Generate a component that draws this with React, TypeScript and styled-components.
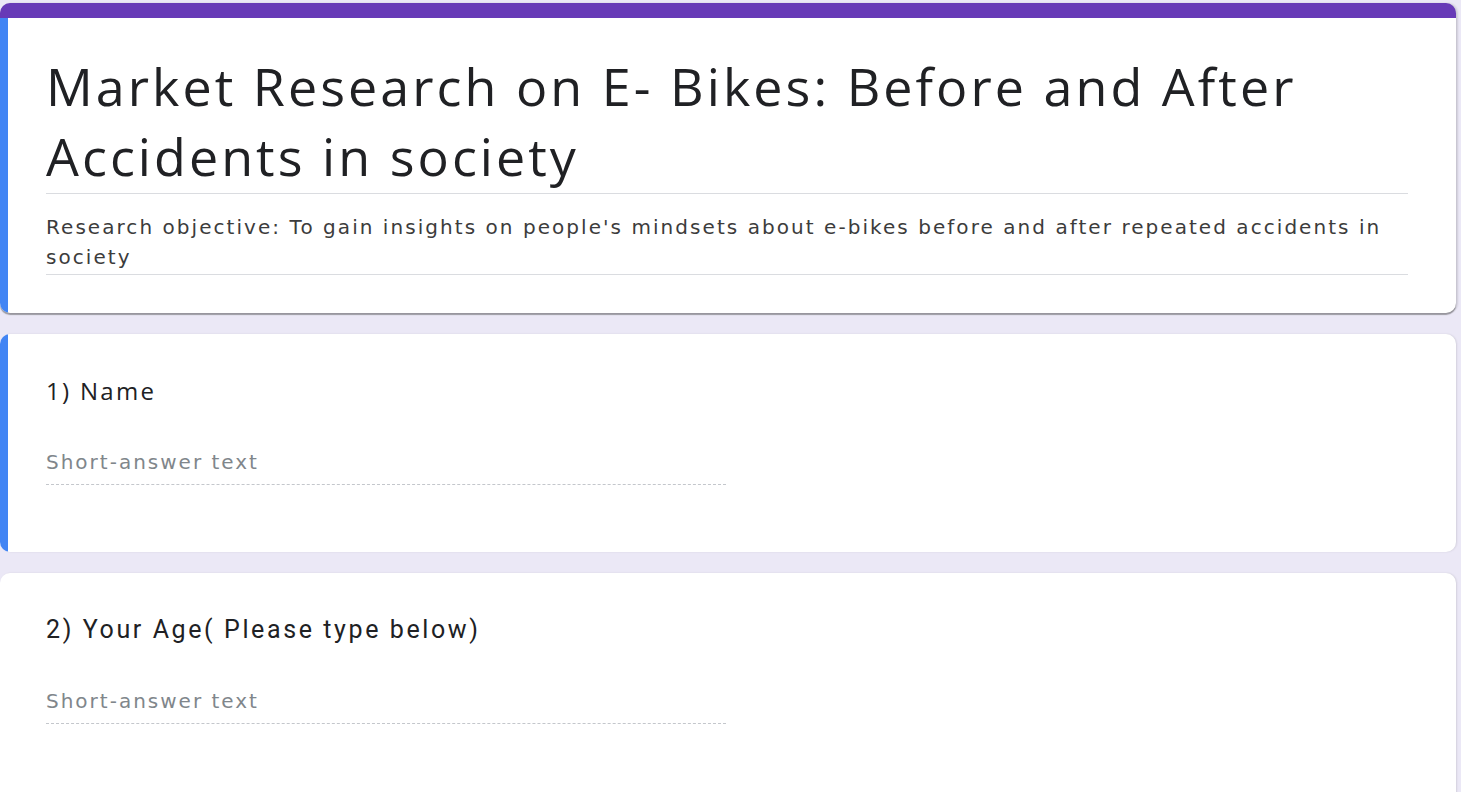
import React from 'react';
import styled, {createGlobalStyle} from 'styled-components';

const GlobalStyle = createGlobalStyle`
  html, body {
    margin: 0;
    padding: 0;
    background: #ebe8f6;
    overflow: hidden;
  }
  #root {
    height: 792px;
  }
`;

const Page = styled.main`
  display: flex;
  flex-direction: column;
  gap: 21px;
  padding: 3px 5px 0 0;
  height: 792px;
  box-sizing: border-box;
`;

const Card = styled.section<{$active?: boolean; $header?: boolean}>`
  position: relative;
  box-sizing: border-box;
  background: #fff;
  border-radius: 10px;
  padding: ${p => (p.$header ? '33px 48px 38px 46px' : '42px 48px 0 46px')};
  border-top: ${p => (p.$header ? '15px solid #673ab7' : 'none')};
  box-shadow: ${p =>
    p.$header
      ? '0 2px 1px rgba(60, 60, 60, 0.45), 2px 0 2px rgba(0,0,0,0.12)'
      : '1px 0 2px rgba(0,0,0,0.1)'};
  overflow: hidden;
  flex-shrink: 0;
  &::before {
    content: '';
    display: ${p => (p.$active ? 'block' : 'none')};
    position: absolute;
    left: 0;
    top: 0;
    bottom: 0;
    width: 8px;
    background: #4285f4;
  }
`;

const Title = styled.h1`
  margin: 0;
  font-family: 'Open Sans', sans-serif;
  font-weight: 400;
  font-size: 52px;
  letter-spacing: 3.05px;
  line-height: 70px;
  color: #202124;
  padding-bottom: 2px;
  border-bottom: 1px solid #dadce0;
`;

const Description = styled.p`
  margin: 18px 0 0;
  font-family: 'DejaVu Sans', sans-serif;
  font-size: 20px;
  line-height: 30px;
  letter-spacing: 2.05px;
  color: #3c3c3c;
  padding-bottom: 2px;
  border-bottom: 1px solid #dadce0;
`;

const Question = styled.div<{$condensed?: boolean}>`
  font-family: ${p => (p.$condensed ? "'Roboto', sans-serif" : "'Open Sans', sans-serif")};
  font-size: ${p => (p.$condensed ? '25px' : '24px')};
  letter-spacing: ${p => (p.$condensed ? '2.6px' : '2.3px')};
  line-height: 30px;
  color: #202124;
`;

const AnswerField = styled.div`
  width: 680px;
  margin-top: 44px;
  font-family: 'DejaVu Sans', sans-serif;
  font-size: 20px;
  letter-spacing: 2px;
  line-height: 24px;
  color: #80868b;
  padding-bottom: 10px;
  border-bottom: 1px dashed #c4c7cc;
`;

const QuestionCard = ({
  label,
  active,
  condensed,
  height,
}: {
  label: string;
  active?: boolean;
  condensed?: boolean;
  height: number;
}) => (
  <Card $active={active} style={{height}}>
    <Question $condensed={condensed}>{label}</Question>
    <AnswerField>Short-answer text</AnswerField>
  </Card>
);

export default function App() {
  return (
    <>
      <GlobalStyle />
      <Page>
        <Card $header $active>
          <Title>
            Market Research on E- Bikes: Before and After Accidents in society
          </Title>
          <Description>
            Research objective: To gain insights on people's mindsets about
            e-bikes before and after repeated accidents in society
          </Description>
        </Card>
        <QuestionCard label="1) Name" active height={218} />
        <QuestionCard label="2) Your Age( Please type below)" condensed height={240} />
      </Page>
    </>
  );
}
